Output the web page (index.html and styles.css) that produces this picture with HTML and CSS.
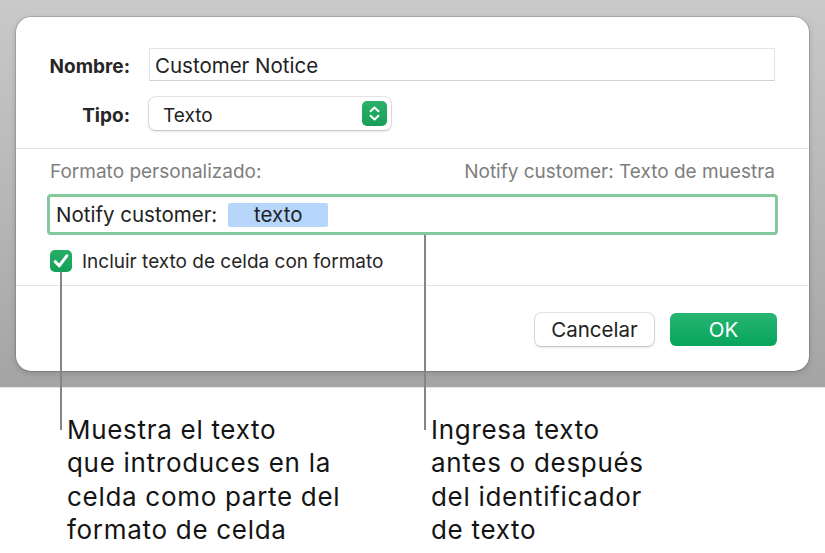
FILE: index.html
```html
<!DOCTYPE html>
<html lang="es">
<head>
<meta charset="utf-8">
<title>Formato personalizado</title>
<link rel="stylesheet" href="styles.css">
</head>
<body>
<div class="page">
  <div class="backdrop">
    <div class="dialog">
      <div class="sec sec-top">
        <div class="form-row">
          <label class="lbl">Nombre:</label>
          <div class="name-field">Customer Notice</div>
        </div>
        <div class="form-row">
          <label class="lbl">Tipo:</label>
          <div class="popup">
            <span>Texto</span>
            <span class="stepper">
              <svg width="25" height="25" viewBox="0 0 25 25"><path d="M8.5 10.2 12.5 6.6 16.5 10.2" fill="none" stroke="#fff" stroke-width="2" stroke-linecap="round" stroke-linejoin="round"/><path d="M8.5 14.8 12.5 18.4 16.5 14.8" fill="none" stroke="#fff" stroke-width="2" stroke-linecap="round" stroke-linejoin="round"/></svg>
            </span>
          </div>
        </div>
      </div>
      <div class="sec sec-mid">
        <div class="head-row">
          <span>Formato personalizado:</span>
          <span>Notify customer: Texto de muestra</span>
        </div>
        <div class="fmt-field">
          <span>Notify customer:</span>
          <span class="token">texto</span>
        </div>
        <div class="check-row">
          <span class="checkbox">
            <svg width="22" height="22" viewBox="0 0 22 22"><path d="M5.2 11.6 9.2 15.8 16.8 5.8" fill="none" stroke="#fff" stroke-width="3" stroke-linecap="round" stroke-linejoin="round"/></svg>
          </span>
          <span>Incluir texto de celda con formato</span>
        </div>
      </div>
      <div class="sec sec-bottom">
        <button class="btn btn-cancel">Cancelar</button>
        <button class="btn btn-ok">OK</button>
      </div>
    </div>
  </div>
  <div class="callouts">
    <p class="callout callout-left">Muestra el texto<br>que introduces en la<br>celda como parte del<br>formato de celda</p>
    <p class="callout callout-right">Ingresa texto<br>antes o después<br>del identificador<br>de texto</p>
  </div>
  <div class="leader leader-left"></div>
  <div class="leader leader-right"></div>
</div>
</body>
</html>
```

FILE: styles.css
```css
* { box-sizing: border-box; }
html, body { margin: 0; padding: 0; background: #fff; }
body {
  font-family: Inter, "Noto Sans", "Liberation Sans", sans-serif;
  color: #1d1d1d;
}
.page { position: relative; width: 825px; height: 553px; overflow: hidden; }

.backdrop {
  height: 388px;
  padding: 17px 16px 0 16px;
  background: linear-gradient(180deg, #c9c9c9 0%, #b4b4b4 60%, #a4a4a4 100%);
  border-bottom: 1px solid #e6e6e6;
}
.dialog {
  height: 354px;
  background: #fff;
  border-radius: 15px;
  box-shadow: 0 0 0 0.5px rgba(0,0,0,0.25), 0 2px 6px rgba(0,0,0,0.18);
  overflow: hidden;
}
.sec { border-bottom: 1px solid #e3e3e3; }
.sec-bottom { border-bottom: none; }

.sec-top { padding: 31px 34px 18px 0; display: flex; flex-direction: column; gap: 16px; }
.form-row { display: grid; grid-template-columns: 114px 1fr; column-gap: 19px; align-items: center; }
.lbl { text-align: right; font-weight: 700; font-size: 19px; color: #262626; padding-top: 3px; }
.name-field {
  height: 33px;
  border: 1px solid #e4e4e4;
  border-bottom-color: #d2d2d2;
  font-size: 20.5px;
  line-height: 33px;
  padding-left: 5px;
  color: #222;
}
.popup {
  width: 242px;
  height: 33px;
  border-radius: 6px;
  background: #fff;
  box-shadow: 0 0 0 0.5px rgba(0,0,0,0.18), 0 1px 2.5px rgba(0,0,0,0.2);
  display: flex;
  align-items: center;
  justify-content: space-between;
  padding: 0 4px 0 14px;
  font-size: 19px;
  color: #222;
}
.popup > span:first-child { padding-top: 3px; }
.stepper {
  width: 25px; height: 25px;
  border-radius: 5px;
  background: linear-gradient(180deg, #2cb06a, #17a05a);
  display: flex;
}

.sec-mid { padding: 13px 31px 13px 31px; }
.head-row {
  display: flex; justify-content: space-between;
  padding: 0 3px;
  font-size: 19px; line-height: 20px;
  color: #7e7e7e;
}
.fmt-field {
  margin-top: 12px;
  height: 41px;
  border: 3.5px solid #84c99c;
  border-radius: 4px;
  display: flex; align-items: center;
  padding-left: 6px;
  font-size: 20.5px;
  color: #222;
}
.token {
  margin-left: 11px;
  width: 100px; height: 24px;
  background: #b6d6fc;
  border-radius: 2px;
  display: flex; align-items: center; justify-content: center;
}
.check-row {
  margin-top: 15px;
  display: flex; align-items: center; gap: 10px;
  padding-left: 3px;
  font-size: 19px; color: #262626;
  height: 22px;
}
.checkbox {
  width: 22px; height: 22px;
  border-radius: 5px;
  background: linear-gradient(180deg, #27ad66, #14a05a);
  display: flex;
  flex: none;
}

.sec-bottom { display: flex; justify-content: flex-end; gap: 16px; padding: 27px 32px 0 0; }
.btn {
  height: 33px;
  border: none;
  border-radius: 6px;
  font-family: inherit;
  font-size: 20.5px;
  padding: 0;
}
.btn-cancel {
  width: 119px;
  background: #fff;
  color: #222;
  box-shadow: 0 0 0 0.5px rgba(0,0,0,0.2), 0 1px 2.5px rgba(0,0,0,0.2);
}
.btn-ok {
  width: 107px;
  background: linear-gradient(180deg, #27b672, #08a45b);
  color: #fff;
}

.callouts { display: flex; padding: 25px 0 0 0; }
.callout {
  margin: 0;
  font-size: 26px;
  letter-spacing: 0.7px;
  line-height: 33.4px;
  color: #141414;
}
.callout-left { margin-left: 67px; width: 364px; }

.leader { position: absolute; width: 2px; background: #858585; }
.leader-left { left: 60px; top: 272px; height: 158px; }
.leader-right { left: 424px; top: 235px; height: 195px; }
```
